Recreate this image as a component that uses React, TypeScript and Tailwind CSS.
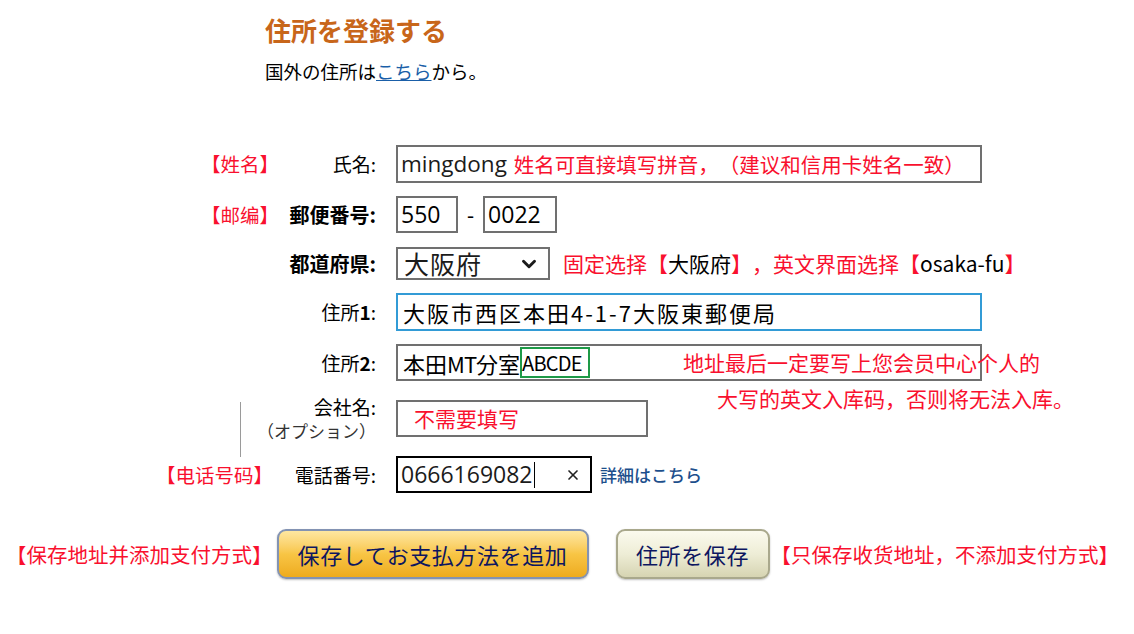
import { ChevronDown, X } from "lucide-react";
import type { ReactNode } from "react";

const jp = "font-['Noto_Sans_CJK_JP',sans-serif]";
const sc = "font-['Noto_Sans_CJK_SC',sans-serif]";
const latin = "font-['Open_Sans','Noto_Sans_CJK_JP',sans-serif]";
const red = "text-[#f9102e]";

type RowProps = {
  note?: ReactNode;
  label: ReactNode;
  children: ReactNode;
  className?: string;
};

// one line of the form: red note | label | field
const Row = ({ note, label, children, className = "" }: RowProps) => (
  <div className={`relative flex items-center ${className}`}>
    <div className={`flex w-[280px] shrink-0 justify-end pr-[1px] text-[19.5px] leading-[24px] ${red} ${sc}`}>
      {note}
    </div>
    <div className={`w-[96px] shrink-0 whitespace-nowrap text-right text-[19px] leading-[24px] text-black ${jp}`}>
      {label}
    </div>
    <div className="ml-[20px] flex h-full items-center">{children}</div>
  </div>
);

const App = () => {
  return (
    <div className="min-h-[634px] w-[1134px] bg-white pt-[14px] text-black [text-spacing-trim:space-all]">
      <div className="pl-[265px]">
        <h1 className={`text-[26px] leading-[32px] font-bold text-[#c8661a] ${jp}`}>住所を登録する</h1>
        <p className={`mt-[14px] text-[18.5px] leading-[22px] ${jp}`}>
          国外の住所は<a className="text-[#1a5fa8] underline">こちら</a>から。
        </p>
      </div>

      <Row className="mt-[63px] h-[38px]" note="【姓名】" label="氏名:">
        <div className="flex h-[38px] w-[586px] items-center whitespace-nowrap border-2 border-[#707070] pl-[3px]">
          <span className={`text-[22.5px] leading-none text-[#1b1b1b] ${latin}`}>mingdong</span>
          <span className={`ml-[7px] text-[20.5px] leading-none ${red} ${sc}`}>
            姓名可直接填写拼音，（建议和信用卡姓名一致）
          </span>
        </div>
      </Row>

      <Row
        className="mt-[13px] h-[37px]"
        note="【邮编】"
        label={<span className="text-[20px] font-bold">郵便番号:</span>}
      >
        <div className={`flex h-[37px] w-[62px] items-center border-2 border-[#707070] pl-[3px] text-[23px] ${latin}`}>
          550
        </div>
        <span className={`mx-[9px] text-[22px] ${latin}`}>-</span>
        <div className={`flex h-[37px] w-[74px] items-center border-2 border-[#707070] pl-[3px] text-[23px] ${latin}`}>
          0022
        </div>
      </Row>

      <Row className="mt-[14px] h-[33px]" label={<span className="text-[20px] font-bold">都道府県:</span>}>
        <div className="flex h-[33px] w-[154px] items-center justify-between border-2 border-[#707070] pl-[6px] pr-[8px]">
          <span className={`text-[25px] leading-none tracking-[1px] text-[#1b1b1b] ${jp}`}>大阪府</span>
          <ChevronDown size={22} strokeWidth={3.2} className="text-[#1b1b1b]" />
        </div>
        <span className={`ml-[13px] whitespace-nowrap text-[21px] leading-none ${red} ${sc}`}>
          固定选择【<span className="text-black">大阪府</span>】，英文界面选择【
          <span className="text-black">osaka-fu</span>】
        </span>
      </Row>

      <Row
        className="mt-[13px] h-[38px]"
        label={
          <>
            住所<span className="font-bold">1</span>:
          </>
        }
      >
        <div className="flex h-[38px] w-[586px] items-center border-2 border-[#329bd6] pl-[5px]">
          <span className={`text-[22px] leading-none tracking-[2px] text-black ${jp}`}>
            大阪市西区本田4-1-7大阪東郵便局
          </span>
        </div>
      </Row>

      <Row
        className="mt-[13px] h-[37px]"
        label={
          <>
            住所<span className="font-bold">2</span>:
          </>
        }
      >
        <div className="flex h-[37px] w-[586px] items-center border-2 border-[#707070] pl-[5px]">
          <span className={`text-[22px] leading-none text-black ${jp}`}>
            本田<span className="tracking-[-1px]">MT</span>分室
          </span>
          <span className="flex h-[31px] items-center border-2 border-[#1e9a48] pr-[6px]">
            <span className={`text-[20px] leading-none tracking-[-0.8px] text-black ${jp}`}>ABCDE</span>
          </span>
        </div>
        <span className={`absolute left-[683px] top-[6px] whitespace-nowrap text-[21px] leading-[24px] ${red} ${sc}`}>
          地址最后一定要写上您会员中心个人的
        </span>
        <span className={`absolute left-[717px] top-[42px] whitespace-nowrap text-[21px] leading-[24px] ${red} ${sc}`}>
          大写的英文入库码，否则将无法入库。
        </span>
      </Row>

      <Row
        className="mt-[19px] h-[37px]"
        note={<div className="mr-[38px] mt-[22px] h-[55px] w-px self-start bg-[#9a9a9a]" />}
        label={
          <div className="flex flex-col items-end">
            <span className="leading-[25px]">会社名:</span>
            <span className="text-[17px] leading-[24px] text-[#333]">（オプション）</span>
          </div>
        }
      >
        <div className="flex h-[37px] w-[252px] items-center border-2 border-[#707070] pl-[16px]">
          <span className={`text-[21px] leading-none ${red} ${sc}`}>不需要填写</span>
        </div>
      </Row>

      <Row className="mt-[19px] h-[37px]" note={<span className="pr-[6px]">【电话号码】</span>} label="電話番号:">
        <div className="flex h-[37px] w-[196px] items-center justify-between border-2 border-black pl-[3px] pr-[9px]">
          <span className="flex items-center">
            <span className={`text-[23px] leading-none text-[#1b1b1b] ${latin}`}>0666169082</span>
            <span className="ml-[1px] h-[26px] w-px bg-black" />
          </span>
          <X size={16} strokeWidth={2.5} className="text-[#222]" />
        </div>
        <a className={`ml-[8px] text-[17px] leading-none font-medium text-[#1d4f8c] ${jp}`}>詳細はこちら</a>
      </Row>

      <div className="mt-[36px] flex h-[50px] items-center pl-[6px]">
        <span className={`text-[20.5px] leading-none ${red} ${sc}`}>【保存地址并添加支付方式】</span>
        <button
          className={`ml-[4px] h-[50px] w-[312px] rounded-[9px] border-2 border-[#8393b3] bg-gradient-to-b from-[#fee7a0] via-[#f8c544] to-[#eeab1c] text-[22px] tracking-[0.6px] text-[#0d1660] shadow-[0_1px_2px_rgba(0,0,0,0.25)] ${jp}`}
        >
          保存してお支払方法を追加
        </button>
        <button
          className={`ml-[27px] h-[50px] w-[154px] rounded-[9px] border-2 border-[#a9a88c] bg-gradient-to-b from-[#fbfaee] via-[#eeedd6] to-[#d6d4b2] text-[22px] tracking-[0.6px] text-[#0d1660] shadow-[0_1px_2px_rgba(0,0,0,0.25)] ${jp}`}
        >
          住所を保存
        </button>
        <span className={`ml-[1px] text-[20.5px] leading-none ${red} ${sc}`}>【只保存收货地址，不添加支付方式】</span>
      </div>
    </div>
  );
};

export default App;
